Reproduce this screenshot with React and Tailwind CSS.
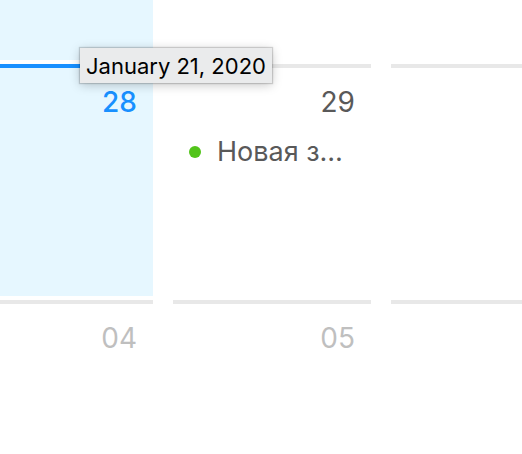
function Cell({ day, tone = "", selected, event, last }) {
  return (
    <td className={"p-0 align-top " + (last ? "" : "pr-5")}>
      <div
        className={
          "h-[232px] border-t-4 px-4 pt-[15px] text-right text-[28px] leading-[38px] " +
          (selected
            ? "border-[#1890ff] bg-[#e6f7ff] font-medium "
            : "border-[#e8e8e8] ") +
          tone
        }
      >
        {day}
        {event && (
          <ul className="pt-3">
            <li className="flex items-center gap-4 text-left text-[27px] text-[#595959]">
              <span className="size-3 shrink-0 rounded-full bg-[#52c41a]" />
              <span>{event}</span>
            </li>
          </ul>
        )}
      </div>
    </td>
  );
}

export default function App() {
  return (
    <main className="relative h-screen overflow-hidden bg-white font-['Inter',sans-serif]">
      <table className="w-full table-fixed border-collapse">
        <colgroup>
          <col className="w-[173px]" />
          <col className="w-[218px]" />
          <col />
        </colgroup>
        <tbody>
          <tr>
            <td className="h-16 p-0 pr-5 align-top">
              <div className="h-[60px] bg-[#e6f7ff]" />
            </td>
            <td />
            <td />
          </tr>
          <tr className="h-[236px]">
            <Cell day="28" selected tone="text-[#1890ff]" />
            <Cell day="29" tone="text-[#595959]" event="Новая з…" />
            <Cell last />
          </tr>
          <tr>
            <Cell day="04" tone="text-[#bfbfbf]" />
            <Cell day="05" tone="text-[#bfbfbf]" />
            <Cell last />
          </tr>
        </tbody>
      </table>
      <div
        role="tooltip"
        className="absolute left-20 top-12 h-[35px] bg-[#eaebec] px-1.5 text-[22px] leading-9 text-black shadow-[0_0_1px_1px_rgba(0,0,0,0.16),0_2px_10px_rgba(0,0,0,0.22)]"
      >
        January 21, 2020
      </div>
    </main>
  );
}
